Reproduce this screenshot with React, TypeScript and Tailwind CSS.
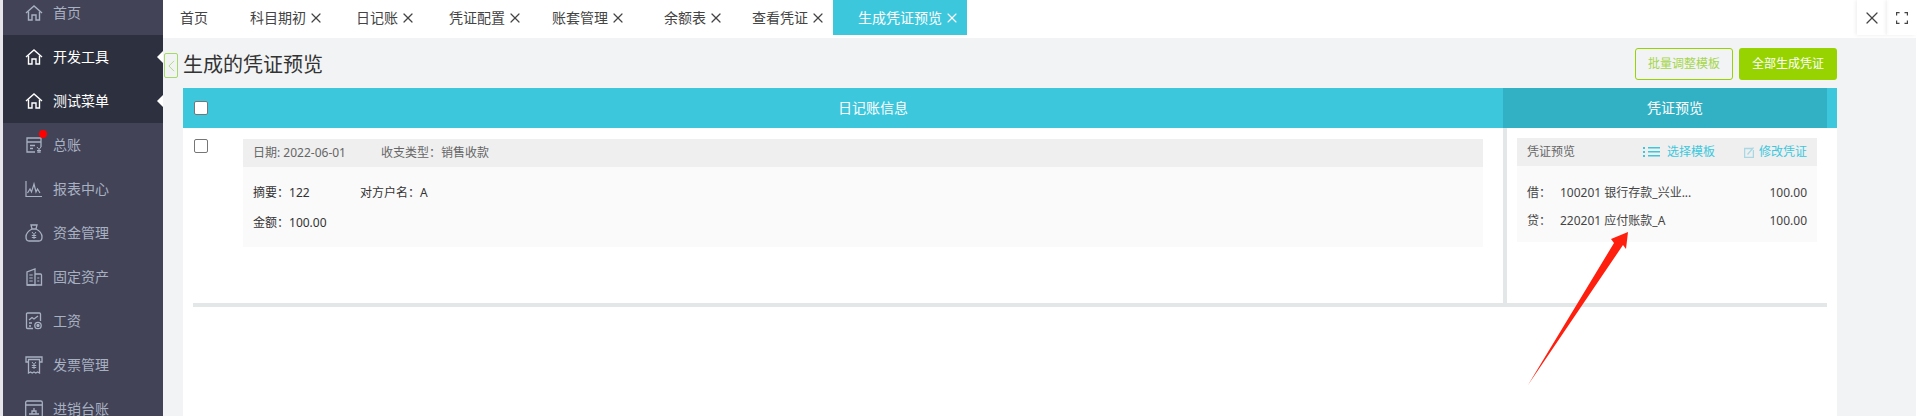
import React from 'react';
import { X } from 'lucide-react';

const FONT = 'font-["Noto_Sans","Noto_Sans_CJK_SC",sans-serif]';
const COLON = '\uFF1A';

const HomeIcon = ({ className }: { className: string }) => (
  <svg viewBox="0 0 18 18" className={className} fill="none" stroke="currentColor" strokeWidth="1.4">
    <path d="M1 9 9 2l8 7" />
    <path d="M3.500 7.500V16h3.500v-5h4v5h3.500V7.500" />
  </svg>
);

const LedgerIcon = () => (
  <svg viewBox="0 0 18 18" className="w-[18px] h-[18px]" fill="none" stroke="currentColor" strokeWidth="1.3">
    <path d="M10 16H2V2h14v9" />
    <path d="M2 6h14M5 9.500h5M5 12.500h3" />
    <path d="m12 11 2 2.500 2-2.500M14 13.500V17M12 14.500h4M12 16h4" strokeWidth="1" />
  </svg>
);

const ReportIcon = () => (
  <svg viewBox="0 0 18 18" className="w-[18px] h-[18px]" fill="none" stroke="currentColor" strokeWidth="1.2">
    <path d="M1 1v15.500h16" />
    <path d="M2.500 13 5 9l1.500 3 2.500-8 2 8 1.500-3 2.500 4" />
  </svg>
);

const MoneyIcon = () => (
  <svg viewBox="0 0 18 18" className="w-[18px] h-[18px]" fill="none" stroke="currentColor" strokeWidth="1.3">
    <path d="M6 1h6l-1 4H7Z" />
    <path d="M7 5C3 7 1 10 1 13c0 2.500 1.500 4 3 4h10c1.500 0 3-1.500 3-4 0-3-2-6-6-8" />
    <path d="m7 8 2 2.500L11 8M9 10.500V15M6.800 11.500h4.400M6.800 13.500h4.400" strokeWidth="1" />
  </svg>
);

const BuildingIcon = () => (
  <svg viewBox="0 0 18 18" className="w-[18px] h-[18px]" fill="none" stroke="currentColor" strokeWidth="1.3">
    <path d="M2 17V4l8-3v16Z" />
    <path d="M10 6h5.500a1 1 0 0 1 1 1v10H2" />
    <path d="M4.500 7h3M4.500 10h3M4.500 13h3M12.500 10h2M12.500 13h2" strokeDasharray="1.200 .6" />
  </svg>
);

const SalaryIcon = () => (
  <svg viewBox="0 0 18 18" className="w-[18px] h-[18px]" fill="none" stroke="currentColor" strokeWidth="1.3">
    <path d="M8 16.500H2.500a1 1 0 0 1-1-1V2a1 1 0 0 1 1-1h12a1 1 0 0 1 1 1v7" />
    <path d="m4 8 3-2.500 2 1.500 4-3M4 11h3M4 14h2" />
    <circle cx="13" cy="13.500" r="3.200" />
    <circle cx="13" cy="13.500" r="1" fill="currentColor" />
  </svg>
);

const InvoiceIcon = () => (
  <svg viewBox="0 0 18 18" className="w-[18px] h-[18px]" fill="none" stroke="currentColor" strokeWidth="1.3">
    <path d="M3.500 6H1V1h16v5h-2.500" />
    <path d="M3.500 3.500v13.500l2-1 1.700 1 1.800-1 1.800 1 1.700-1 2 1V3.500Z" />
    <path d="m7 6 2 2.500L11 6M9 8.500V13M6.800 9.500h4.400M6.800 11.500h4.400" strokeWidth="1" />
  </svg>
);

const StockIcon = () => (
  <svg viewBox="0 0 18 18" className="w-[18px] h-[18px]" fill="none" stroke="currentColor" strokeWidth="1.3">
    <rect x="0.700" y="1" width="16.600" height="16" rx="1.500" />
    <path d="M1 5h16M4 14h10M7 14v-3h4v3M9 11V8" />
  </svg>
);

type MenuItem = { label: string; icon: React.ReactNode; active?: boolean; dot?: boolean };

const menu: MenuItem[] = [
  { label: '首页', icon: <HomeIcon className="w-[18px] h-[18px]" /> },
  { label: '开发工具', icon: <HomeIcon className="w-[18px] h-[18px]" />, active: true },
  { label: '测试菜单', icon: <HomeIcon className="w-[18px] h-[18px]" />, active: true },
  { label: '总账', icon: <LedgerIcon />, dot: true },
  { label: '报表中心', icon: <ReportIcon /> },
  { label: '资金管理', icon: <MoneyIcon /> },
  { label: '固定资产', icon: <BuildingIcon /> },
  { label: '工资', icon: <SalaryIcon /> },
  { label: '发票管理', icon: <InvoiceIcon /> },
  { label: '进销台账', icon: <StockIcon /> },
];

const tabs = [
  { label: '科目期初', w: 'w-[106px]' },
  { label: '日记账', w: 'w-[93px]' },
  { label: '凭证配置', w: 'w-[103px]' },
  { label: '账套管理', w: 'w-[112px]' },
  { label: '余额表', w: 'w-[88px]' },
  { label: '查看凭证', w: 'w-[81px]' },
];

const Sidebar = () => (
  <aside className="w-[163px] shrink-0 border-l-[3px] border-l-[#e6e6ea] bg-[#434357] -mt-[9px] h-[425px] overflow-hidden">
    {menu.map((item) => (
      <div
        key={item.label}
        className={`relative h-[44px] flex items-center pl-[22px] gap-[10px] text-sm ${
          item.active ? 'bg-[#2d303e] text-white' : 'text-[#a7b1c2]'
        }`}
      >
        {item.icon}
        <span>{item.label}</span>
        {item.dot && <span className="absolute left-[36px] top-[7px] w-2 h-2 rounded-full bg-[#ff0000]" />}
        {item.active && (
          <span className="absolute right-0 top-[16px] border-y-[6px] border-y-transparent border-r-[6px] border-r-white" />
        )}
      </div>
    ))}
  </aside>
);

const TopBar = () => (
  <div className="h-[38px] bg-white flex shrink-0 text-sm text-[#444]">
    <div className="w-[87px] h-[35px] pl-[17px] flex items-center">首页</div>
    {tabs.map((tab) => (
      <div key={tab.label} className={`${tab.w} h-[35px] flex items-center gap-[2px]`}>
        <span className="shrink-0">{tab.label}</span>
        <X size={16} strokeWidth={1.8} className="shrink-0" />
      </div>
    ))}
    <div className="w-[134px] h-[35px] pl-[25px] bg-[#3dc7dd] text-white flex items-center gap-[2px]">
      <span>生成凭证预览</span>
      <X size={16} strokeWidth={1.6} />
    </div>
    <div className="ml-auto flex h-[35px]">
      <div className="w-[30px] flex items-center justify-center shadow-[-1px_0_4px_rgba(0,0,0,0.08)] text-[#444]">
        <X size={20} strokeWidth={1.5} />
      </div>
      <div className="w-[29px] flex items-center justify-center shadow-[-1px_0_4px_rgba(0,0,0,0.08)] text-[#444]">
        <svg viewBox="0 0 12 12" className="w-3 h-3" fill="none" stroke="currentColor" strokeWidth="1.2">
          <path d="M.6 3.500V.6h3M8.500.6h2.900v2.900M11.400 8.500v2.900H8.500M3.500 11.400H.6V8.500" />
        </svg>
      </div>
    </div>
  </div>
);

const Checkbox = () => (
  <span className="block w-[14px] h-[14px] rounded-[2px] border border-[#767676] bg-white" />
);

const Preview = () => (
  <div className="flex-1 min-h-0 pl-[20px] pr-[79px]">
    <div className="h-[50px] flex items-center justify-between relative">
      <button className="absolute -left-[19px] top-[15px] w-[14px] h-[25px] border border-[#a6d96a] rounded-[2px] flex items-center justify-center">
        <svg viewBox="0 0 8 14" className="w-[7px] h-[12px]" fill="none" stroke="#a6d96a" strokeWidth="1">
          <path d="M7 1 1 7l6 6" />
        </svg>
      </button>
      <h1 className="text-[20px] text-[#333] leading-none mt-[4px]">生成的凭证预览</h1>
      <div className="flex gap-[6px] text-xs mt-[2px]">
        <button className="w-[98px] h-[32px] rounded-[3px] border border-[#97d300] text-[#a5d64a]">批量调整模板</button>
        <button className="w-[98px] h-[32px] rounded-[3px] bg-[#97d300] text-white">全部生成凭证</button>
      </div>
    </div>
    <div className="bg-[#3dc7dd] h-[40px] flex text-white text-sm">
      <div className="w-[1320px] pl-[60px] relative flex items-center justify-center">
        <span className="absolute left-[11px] top-[13px]"><Checkbox /></span>
        <span>日记账信息</span>
      </div>
      <div className="w-[324px] pl-[20px] bg-[#33b1c4] flex items-center justify-center">凭证预览</div>
    </div>
    <div className="bg-white h-[288px]">
      <div className="flex mx-[10px] h-[179px] border-b-4 border-[#e4e7e8] w-[1634px]">
        <div className="w-[1310px] flex pt-[11px]">
          <span className="ml-px"><Checkbox /></span>
          <div className="ml-[35px] w-[1240px] h-[108px] bg-[#fafafa] text-xs text-[#333]">
            <div className="h-[28px] bg-[#efefef] flex items-center px-[10px] text-[#666]">
              <span className="w-[128px]">日期: 2022-06-01</span>
              <span>收支类型{COLON}销售收款</span>
            </div>
            <div className="px-[10px] pt-[18px] flex">
              <span className="w-[107px]">摘要{COLON}122</span>
              <span>对方户名{COLON}A</span>
            </div>
            <div className="px-[10px] pt-[14px]">金额{COLON}100.00</div>
          </div>
        </div>
        <div className="w-[324px] border-l-4 border-[#e4e7e8] pl-[10px] pt-[10px]">
          <div className="w-[300px] h-[104px] bg-[#fafafa] text-xs text-[#444]">
            <div className="h-[28px] bg-[#efefef] flex items-center px-[10px] text-[#666]">
              <span className="mr-auto">凭证预览</span>
              <svg viewBox="0 0 17 10" className="w-[17px] h-[10px] mr-[7px]" fill="#3dc7dd">
                <path d="M0 0h2v2H0ZM0 4h2v2H0ZM0 8h2v2H0ZM5 0h12v1.500H5ZM5 4h12v1.500H5ZM5 8h12v1.500H5Z" />
              </svg>
              <span className="text-[#3dc7dd] mr-[29px]">选择模板</span>
              <svg viewBox="0 0 10 11" className="w-[10px] h-[11px] mr-[5px]" fill="none" stroke="#a9d8e4" strokeWidth="1.300">
                <path d="M8 1.500H.6v8.900h8.800V3M3.500 7.500 9.500.5" />
              </svg>
              <span className="text-[#3dc7dd]">修改凭证</span>
            </div>
            <div className="pt-[8px]">
              <div className="px-[10px] pt-[11px] h-[28px] flex items-start">
                <span className="w-[33px]">借{COLON}</span>
                <span className="flex-1">100201 银行存款_兴业...</span>
                <span>100.00</span>
              </div>
              <div className="px-[10px] pt-[11px] h-[28px] flex items-start">
                <span className="w-[33px]">贷{COLON}</span>
                <span className="flex-1">220201 应付账款_A</span>
                <span>100.00</span>
              </div>
            </div>
          </div>
        </div>
      </div>
    </div>
  </div>
);

export default function App() {
  return (
    <div className={`relative w-[1916px] h-[416px] overflow-hidden flex bg-white ${FONT}`}>
      <Sidebar />
      <main className="flex-1 min-w-0 flex flex-col bg-[#f2f3f5]">
        <TopBar />
        <Preview />
      </main>
      {/* annotation arrow drawn over the screenshot */}
      <svg className="absolute left-0 top-0 pointer-events-none" width="1916" height="416" fill="#ff1f0f">
        <path d="M1628 232 1626 249 1623 245 1528 385 1614 243 1611 239Z" />
      </svg>
    </div>
  );
}
